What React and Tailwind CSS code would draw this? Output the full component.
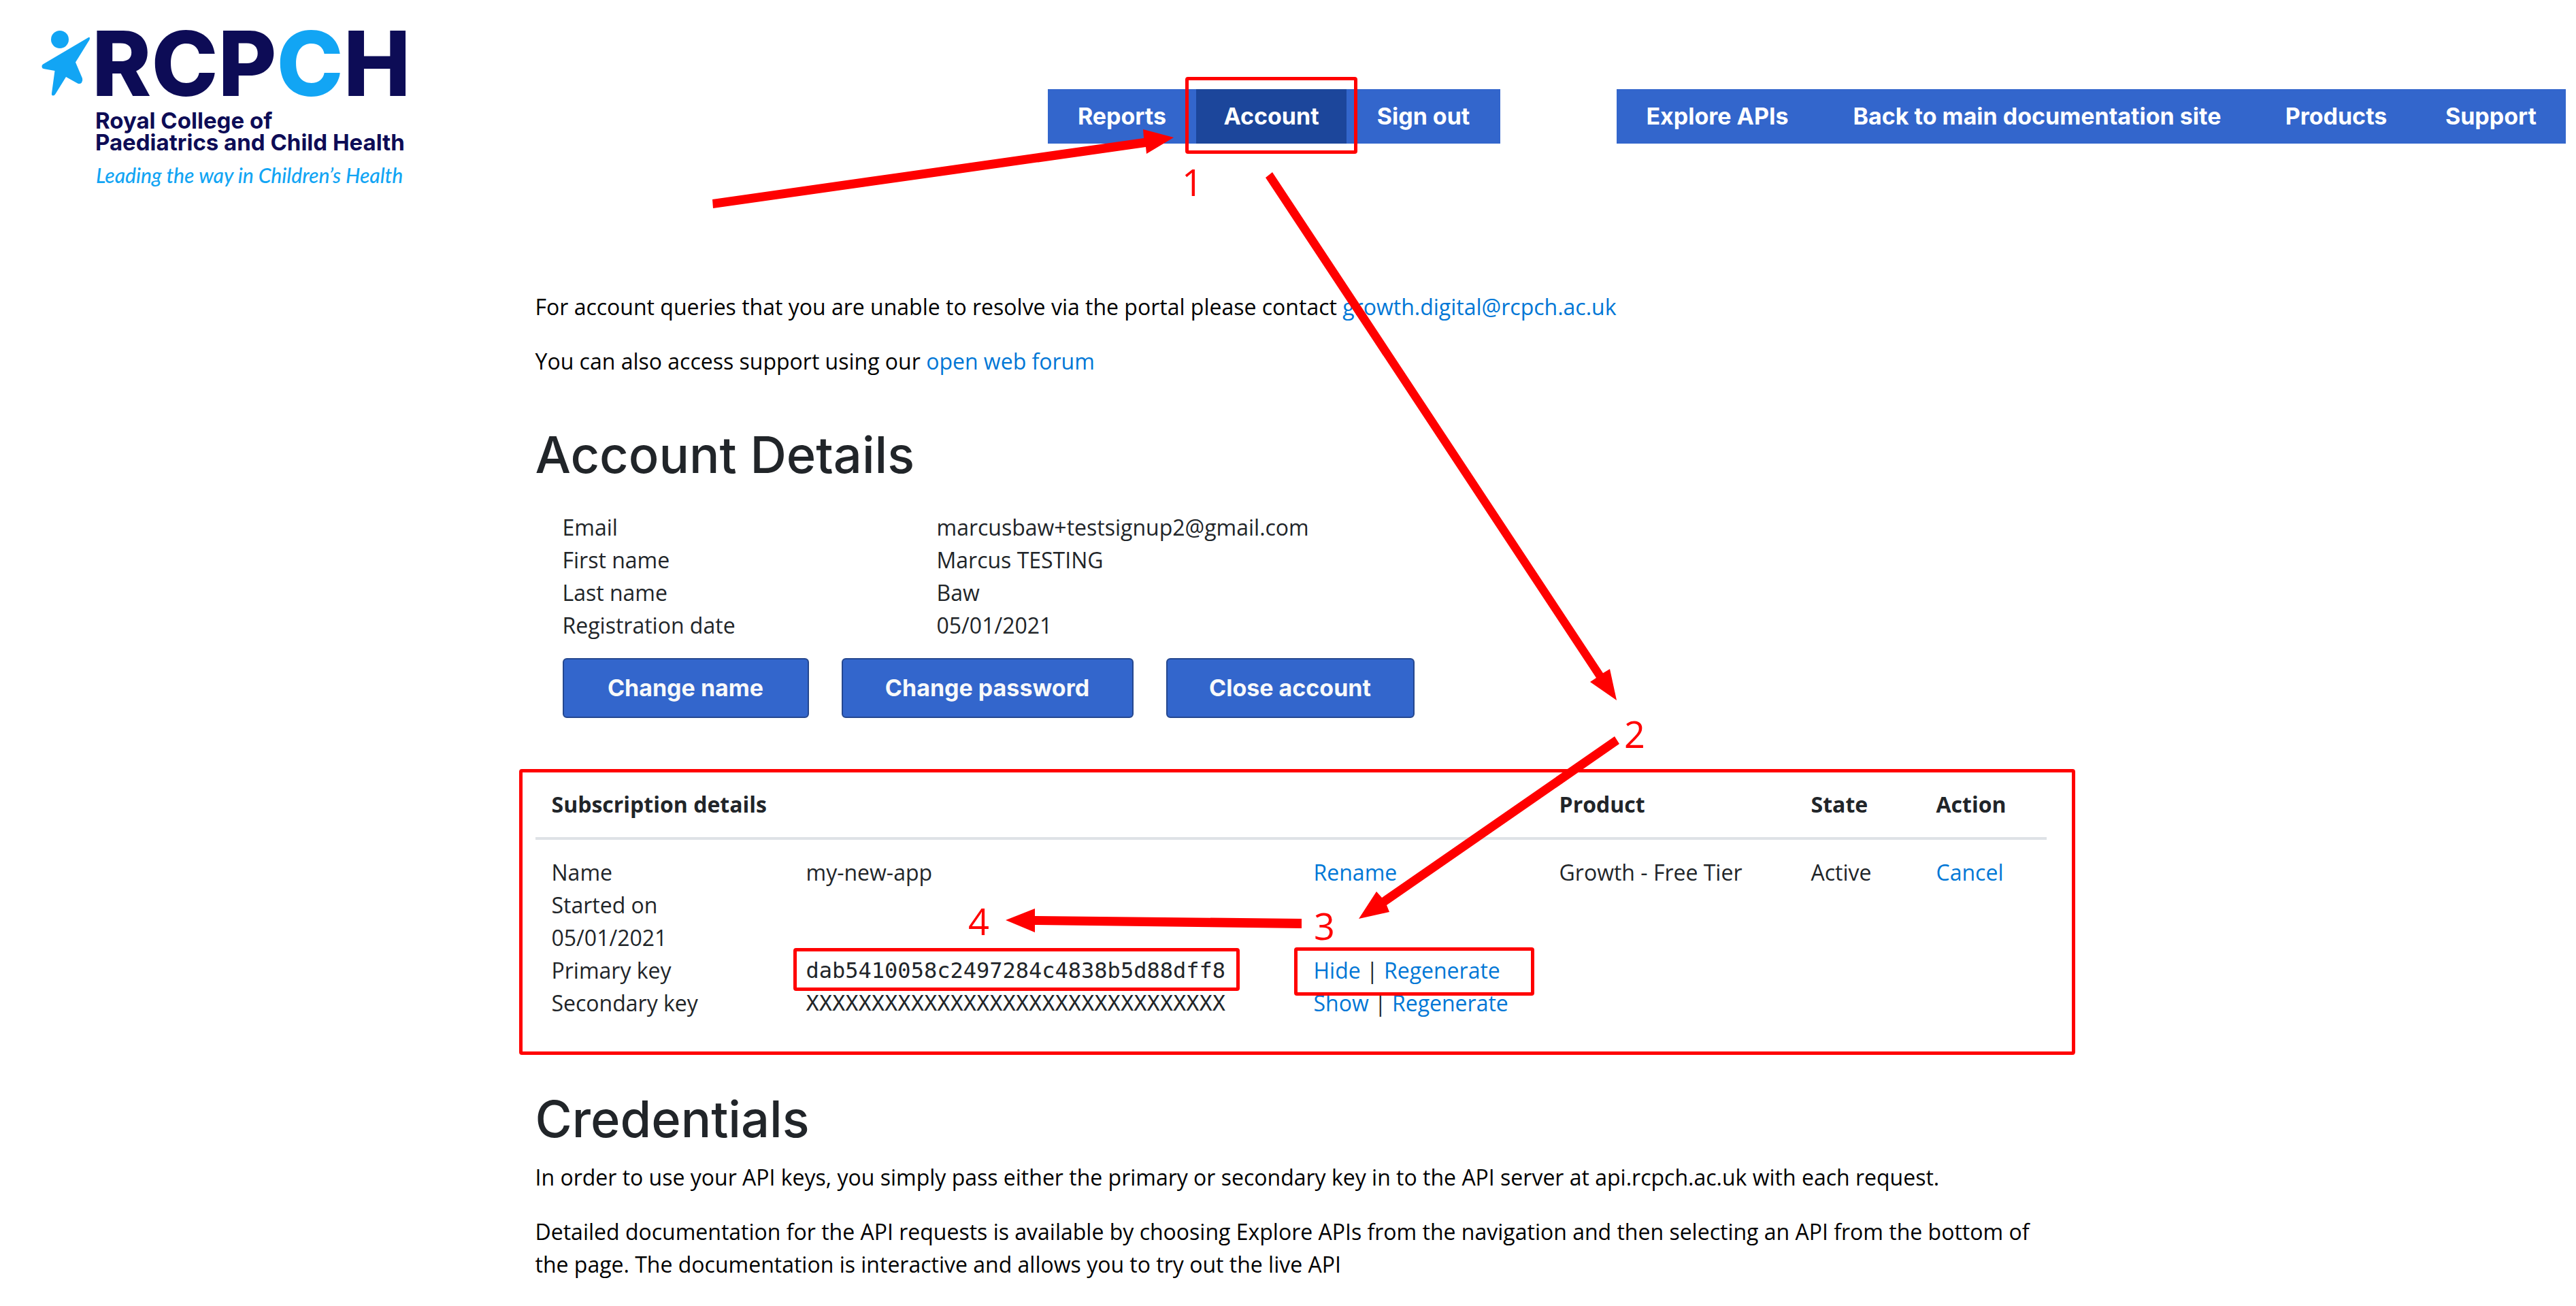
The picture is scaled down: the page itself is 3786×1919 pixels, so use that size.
const account = [
  ["Email", "marcusbaw+testsignup2@gmail.com"],
  ["First name", "Marcus TESTING"],
  ["Last name", "Baw"],
  ["Registration date", "05/01/2021"],
];

const link = "text-[#0077d6]";

function Logo() {
  return (
    <svg className="h-[290px] w-[560px]" viewBox="50 0 560 290" role="img" aria-label="RCPCH">
      <g fill="#12a5f4">
        <circle cx="88" cy="58" r="13" />
        <path d="M130 55 L63 94.500 Q61 96 61.500 98.500 Q62 101 65 101.300 L80.500 104 L76 137 Q75.500 140.500 78 140.500 Q80 140.500 81.500 138 L97 113 L114 122.500 Q117.500 124 120 121.500 Q122 118.500 121 115 L111 91.500 L131.500 58.500 Q133 54 130 55 Z" />
      </g>
      <g fill="#0d0c56" fontFamily="Inter, sans-serif">
        <text x="135" y="141" fontSize="132" fontWeight="800">
          RCP<tspan fill="#12a5f4">C</tspan>H
        </text>
        <text x="140" y="189" fontSize="33" fontWeight="700">Royal College of</text>
        <text x="140" y="221" fontSize="33" fontWeight="700">Paediatrics and Child Health</text>
      </g>
      <text x="141" y="269" fontSize="30" fontWeight="500" fontStyle="italic" fill="#12a5f4" fontFamily="Lato, sans-serif">
        Leading the way in Children’s Health
      </text>
    </svg>
  );
}

function NavItem({ width, active, children }) {
  return (
    <li className={width}>
      <a
        href="#"
        className={
          "relative flex h-20 items-center justify-center whitespace-nowrap text-white " +
          (active ? "bg-[#1c469b]" : "")
        }
      >
        {children}
        {active && <span className="absolute -inset-x-4 -top-[18px] -bottom-[15px] rounded-sm border-5 border-[#ff0000]" />}
      </a>
    </li>
  );
}

function ActionButton({ width, children }) {
  return (
    <button
      type="button"
      className={
        "h-22 rounded-md border-2 border-[#24478f] bg-[#3366cc] font-[Inter,sans-serif] text-[34px] font-bold text-[#f8f9fa] " + width
      }
    >
      {children}
    </button>
  );
}

function Arrows() {
  return (
    <svg className="pointer-events-none absolute top-0 left-0 h-[1919px] w-[3786px]" viewBox="0 0 3786 1919" aria-hidden="true">
      <g fill="#ff0000">
        <path d="M1047 293 L1681 203 L1680 190 L1725 202 L1685 226 L1684 216 L1048 306 Z" />
        <path d="M1870 253 L2356 989 L2366 983 L2376 1029 L2337 1002 L2346 996 L1860 261 Z" />
        <path d="M2373 1082 L2031 1319 L2023 1310 L1997 1350 L2042 1340 L2038 1330 L2380 1093 Z" />
        <path d="M1913 1350 L1521 1346 L1521 1335 L1478 1352 L1521 1370 L1521 1359 L1913 1364 Z" />
      </g>
      <g fill="#ff0000" fontFamily="'Open Sans', sans-serif" fontSize="54">
        <text x="1737" y="288">1</text>
        <text x="2387" y="1099">2</text>
        <text x="1931" y="1381">3</text>
        <text x="1423" y="1374">4</text>
      </g>
    </svg>
  );
}

export default function App() {
  return (
    <div className="relative min-h-[1919px] bg-white font-['Open_Sans',sans-serif] text-[32px] leading-[48px] text-[#212529]">
      <header className="flex items-start pr-[15px] pb-[137px] pl-[50px]">
        <Logo />
        <div className="ml-auto flex gap-[171px] pt-[131px] font-[Inter,sans-serif] text-[34px] font-bold">
          <nav aria-label="Account">
            <ul className="flex bg-[#3366cc]">
              <NavItem width="w-[218px]">Reports</NavItem>
              <NavItem width="w-[221px]" active>Account</NavItem>
              <NavItem width="w-[226px]">Sign out</NavItem>
            </ul>
          </nav>
          <nav aria-label="Main">
            <ul className="flex bg-[#3366cc]">
              <NavItem width="w-[296px]">Explore APIs</NavItem>
              <NavItem width="w-[644px]">Back to main documentation site</NavItem>
              <NavItem width="w-[235px]">Products</NavItem>
              <NavItem width="w-[220px]">Support</NavItem>
            </ul>
          </nav>
        </div>
      </header>

      <main className="mx-auto max-w-[2229px] pl-2">
        <div className="space-y-8 text-black">
          <p>
            For account queries that you are unable to resolve via the portal please contact{" "}
            <a href="#" className={link}>growth.digital@rcpch.ac.uk</a>
          </p>
          <p>
            You can also access support using our <a href="#" className={link}>open web forum</a>
          </p>
        </div>

        <h1 className="mt-[70px] font-[Inter,sans-serif] text-[74px] leading-[86px] font-medium">Account Details</h1>
        <dl className="mt-10 grid grid-cols-[550px_1fr] px-10">
          {account.map(([name, value]) => (
            <div key={name} className="contents">
              <dt>{name}</dt>
              <dd>{value}</dd>
            </div>
          ))}
        </dl>
        <div className="mt-6 flex gap-12 px-10">
          <ActionButton width="w-[362px]">Change name</ActionButton>
          <ActionButton width="w-[429px]">Change password</ActionButton>
          <ActionButton width="w-[365px]">Close account</ActionButton>
        </div>

        <section className="relative mt-[75px] pt-1 pb-[52px]">
          <div className="pointer-events-none absolute -inset-y-0 -right-[42px] -left-6 rounded-sm border-5 border-[#ff0000]" />
          <table className="w-full table-fixed text-left">
            <colgroup>
              <col className="w-[374px]" />
              <col className="w-[746px]" />
              <col className="w-[361px]" />
              <col className="w-[370px]" />
              <col className="w-[184px]" />
              <col />
            </colgroup>
            <thead>
              <tr className="border-b-4 border-[#dee2e6] *:px-6 *:pt-6 *:pb-6 *:font-bold">
                <th colSpan="3">Subscription details</th>
                <th>Product</th>
                <th>State</th>
                <th>Action</th>
              </tr>
            </thead>
            <tbody className="align-top">
              <tr className="*:px-6 *:pt-6">
                <td>Name</td>
                <td>my-new-app</td>
                <td><a href="#" className={link}>Rename</a></td>
                <td>Growth - Free Tier</td>
                <td>Active</td>
                <td><a href="#" className={link}>Cancel</a></td>
              </tr>
              <tr className="*:px-6">
                <td colSpan="6">Started on<br />05/01/2021</td>
              </tr>
              <tr className="*:px-6">
                <td>Primary key</td>
                <td className="relative font-['DejaVu_Sans_Mono',monospace]">
                  dab5410058c2497284c4838b5d88dff8
                  <span className="absolute -top-[9px] left-[5px] h-[63px] w-[656px] rounded-sm border-5 border-[#ff0000]" />
                </td>
                <td className="relative" colSpan="4">
                  <a href="#" className={link}>Hide</a> | <a href="#" className={link}>Regenerate</a>
                  <span className="absolute -top-[10px] -left-[5px] h-[71px] w-[353px] rounded-sm border-5 border-[#ff0000]" />
                </td>
              </tr>
              <tr className="*:px-6">
                <td>Secondary key</td>
                <td className="font-['DejaVu_Sans_Mono',monospace]">XXXXXXXXXXXXXXXXXXXXXXXXXXXXXXXX</td>
                <td colSpan="4">
                  <a href="#" className={link}>Show</a> | <a href="#" className={link}>Regenerate</a>
                </td>
              </tr>
            </tbody>
          </table>
        </section>

        <h1 className="mt-[51px] font-[Inter,sans-serif] text-[74px] leading-[86px] font-medium">Credentials</h1>
        <div className="mt-[19px] space-y-8 text-black">
          <p>
            In order to use your API keys, you simply pass either the primary or secondary key in to the API server at
            api.rcpch.ac.uk with each request.
          </p>
          <p>
            Detailed documentation for the API requests is available by choosing Explore APIs from the navigation and
            then selecting an API from the bottom of the page. The documentation is interactive and allows you to try
            out the live API
          </p>
        </div>
      </main>
      <Arrows />
    </div>
  );
}
